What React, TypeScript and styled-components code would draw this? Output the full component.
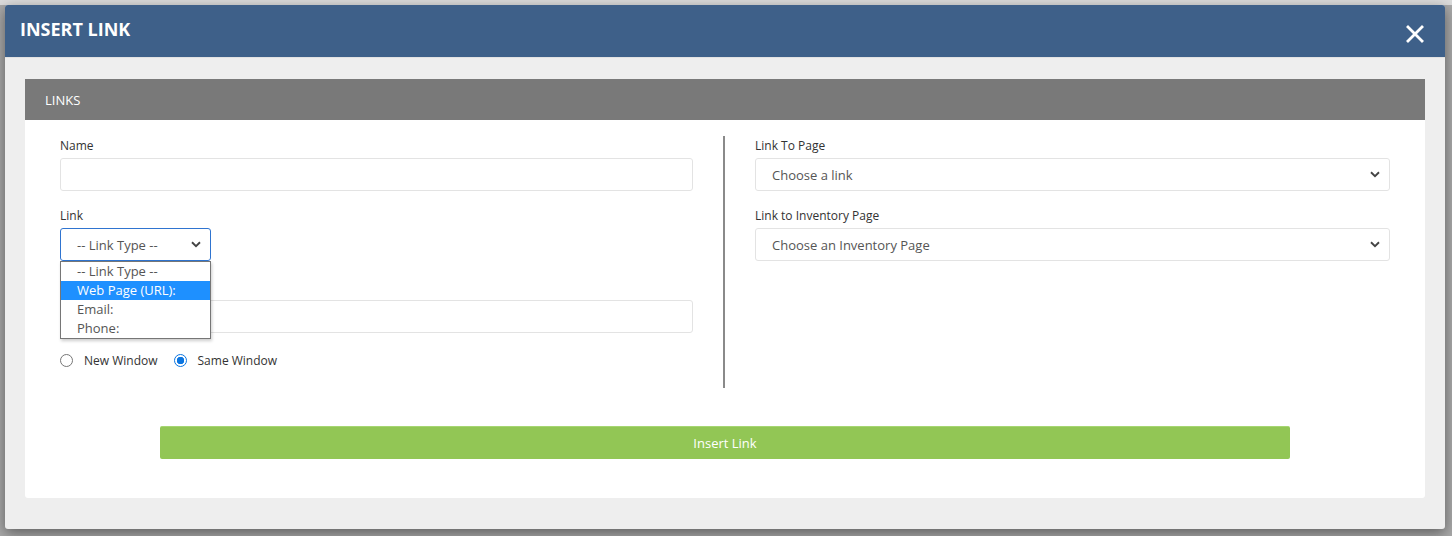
import React, { ReactElement, useState } from 'react';
import styled, { createGlobalStyle } from 'styled-components';

const GlobalStyle = createGlobalStyle`
  html, body {
    margin: 0;
    padding: 0;
  }
  body {
    width: 1452px;
    height: 536px;
    overflow: hidden;
    background: linear-gradient(#dcdcdc 0, #dcdcdc 5px, #a9a9a9 5px, #a9a9a9 100%);
    font-family: 'Open Sans', 'Noto Sans', sans-serif;
  }
`;

const LINK_TYPES = ['-- Link Type --', 'Web Page (URL):', 'Email:', 'Phone:'];

function Chevron(): ReactElement {
  return (
    <ChevronSvg viewBox="0 0 10 7" aria-hidden>
      <path d="M1 1.3 L5 5.2 L9 1.3" fill="none" stroke="#444" strokeWidth="1.9" />
    </ChevronSvg>
  );
}

function CloseIcon(): ReactElement {
  return (
    <CloseSvg viewBox="0 0 18 18" aria-hidden>
      <path d="M2 2 L16 16 M16 2 L2 16" stroke="#fff" strokeWidth="2.8" strokeLinecap="square" />
    </CloseSvg>
  );
}

function App(): ReactElement {
  const [target, setTarget] = useState<'new' | 'same'>('same');
  const [hovered] = useState(1);

  return (
    <>
      <GlobalStyle />
      <Modal>
        <ModalHeader>
          <Title>INSERT LINK</Title>
          <CloseButton type="button">
            <CloseIcon />
          </CloseButton>
        </ModalHeader>
        <ModalBody>
          <Panel>
            <PanelHeader>LINKS</PanelHeader>
            <PanelBody>
              <Columns>
                <Column>
                  <Field>
                    <Label>Name</Label>
                    <TextInput />
                  </Field>
                  <Field>
                    <Label>Link</Label>
                    <SelectWrap>
                      <SelectBox width={151} focused>
                        <span>-- Link Type --</span>
                        <Chevron />
                      </SelectBox>
                      <OptionList>
                        {LINK_TYPES.map((item, index) => (
                          <Option key={item} active={index === hovered}>
                            {item}
                          </Option>
                        ))}
                      </OptionList>
                    </SelectWrap>
                  </Field>
                  <Field offset={2}>
                    <Label covered>URL</Label>
                    <TextInput />
                  </Field>
                  <RadioRow>
                    <RadioLabel onClick={() => setTarget('new')}>
                      <Radio checked={target === 'new'} />
                      New Window
                    </RadioLabel>
                    <RadioLabel onClick={() => setTarget('same')}>
                      <Radio checked={target === 'same'} />
                      Same Window
                    </RadioLabel>
                  </RadioRow>
                </Column>
                <Divider />
                <Column>
                  <Field>
                    <Label>Link To Page</Label>
                    <SelectBox>
                      <span>Choose a link</span>
                      <Chevron />
                    </SelectBox>
                  </Field>
                  <Field>
                    <Label>Link to Inventory Page</Label>
                    <SelectBox>
                      <span>Choose an Inventory Page</span>
                      <Chevron />
                    </SelectBox>
                  </Field>
                </Column>
              </Columns>
              <ButtonRow>
                <InsertButton type="button">Insert Link</InsertButton>
              </ButtonRow>
            </PanelBody>
          </Panel>
        </ModalBody>
      </Modal>
    </>
  );
}

const Modal = styled.div`
  margin: 5px 0 0 5px;
  width: 1440px;
  height: 524px;
  display: flex;
  flex-direction: column;
  border-radius: 3px;
  overflow: hidden;
  background: #eeeeee;
  box-shadow: 0 4px 14px rgba(0, 0, 0, 0.45);
`;

const ModalHeader = styled.div`
  height: 52px;
  flex: none;
  display: flex;
  align-items: center;
  justify-content: space-between;
  padding: 0 20px 0 15px;
  background: #3e6089;
  border-bottom: 1px solid #e2e2e2;
`;

const Title = styled.div`
  color: #fff;
  font-size: 18px;
  font-weight: 700;
  margin-top: -4px;
`;

const CloseButton = styled.button`
  border: 0;
  background: none;
  padding: 0;
  margin-right: 1px;
  margin-top: 6px;
  display: flex;
  cursor: pointer;
`;

const CloseSvg = styled.svg`
  width: 18px;
  height: 18px;
`;

const ModalBody = styled.div`
  flex: 1;
  padding: 21px 20px 31px;
  display: flex;
`;

const Panel = styled.div`
  flex: 1;
  display: flex;
  flex-direction: column;
  background: #fff;
  border-radius: 0 0 3px 3px;
`;

const PanelHeader = styled.div`
  height: 41px;
  flex: none;
  display: flex;
  align-items: center;
  padding: 0 20px;
  background: #797979;
  color: #fff;
  font-size: 13px;
`;

const PanelBody = styled.div`
  padding: 16px 35px 39px;
`;

const Columns = styled.div`
  display: grid;
  grid-template-columns: 633px 2px 635px;
  column-gap: 30px;
  height: 252px;
`;

const Column = styled.div`
  display: flex;
  flex-direction: column;
  gap: 16px;
  padding-top: 1px;
`;

const Divider = styled.div`
  background: #8a8a8a;
`;

const Field = styled.div<{ offset?: number }>`
  display: flex;
  flex-direction: column;
  align-items: flex-start;
  margin-top: ${({ offset }) => offset ?? 0}px;
`;

const Label = styled.label<{ covered?: boolean }>`
  font-size: 12px;
  line-height: 17px;
  color: #333;
  margin: 0 0 4px;
  visibility: ${({ covered }) => (covered ? 'hidden' : 'visible')};
`;

const TextInput = styled.input`
  box-sizing: border-box;
  width: 100%;
  height: 33px;
  border: 1px solid #e3e3e3;
  border-radius: 3px;
  outline: none;
`;

const SelectWrap = styled.div`
  position: relative;
`;

const SelectBox = styled.div<{ width?: number; focused?: boolean }>`
  box-sizing: border-box;
  width: ${({ width }) => (width ? `${width}px` : '100%')};
  height: 33px;
  display: flex;
  align-items: center;
  justify-content: space-between;
  padding: 0 9px 0 16px;
  border: 1px solid ${({ focused }) => (focused ? '#2f74d0' : '#e3e3e3')};
  border-radius: 3px;
  font-size: 13px;
  color: #555;
`;

const ChevronSvg = styled.svg`
  width: 10px;
  height: 7px;
`;

const OptionList = styled.ul`
  position: absolute;
  top: 33px;
  left: 0;
  z-index: 2;
  box-sizing: border-box;
  width: 151px;
  margin: 0;
  padding: 0;
  list-style: none;
  background: #fff;
  border: 1px solid #767676;
  box-shadow: 1px 2px 3px rgba(0, 0, 0, 0.2);
`;

const Option = styled.li<{ active: boolean }>`
  height: 19px;
  line-height: 19px;
  padding-left: 16px;
  font-size: 13px;
  color: ${({ active }) => (active ? '#fff' : '#555')};
  background: ${({ active }) => (active ? '#1e90ff' : '#fff')};
`;

const RadioRow = styled.div`
  display: flex;
  gap: 16px;
  margin-top: 3px;
`;

const RadioLabel = styled.label`
  display: flex;
  align-items: center;
  gap: 11px;
  font-size: 12px;
  color: #333;
  cursor: pointer;
`;

const Radio = styled.span<{ checked: boolean }>`
  box-sizing: border-box;
  width: 13px;
  height: 13px;
  border-radius: 50%;
  border: 1px solid ${({ checked }) => (checked ? '#0b75e0' : '#767676')};
  background: ${({ checked }) =>
    checked ? 'radial-gradient(circle, #0b75e0 0 3.5px, #fff 4px)' : '#fff'};
`;

const ButtonRow = styled.div`
  padding: 38px 100px 0;
`;

const InsertButton = styled.button`
  width: 100%;
  height: 33px;
  border: 0;
  border-top: 1px solid #a6d672;
  border-radius: 2px;
  background: #92c655;
  color: #fff;
  font-family: inherit;
  font-size: 13px;
  cursor: pointer;
`;

export default App;
